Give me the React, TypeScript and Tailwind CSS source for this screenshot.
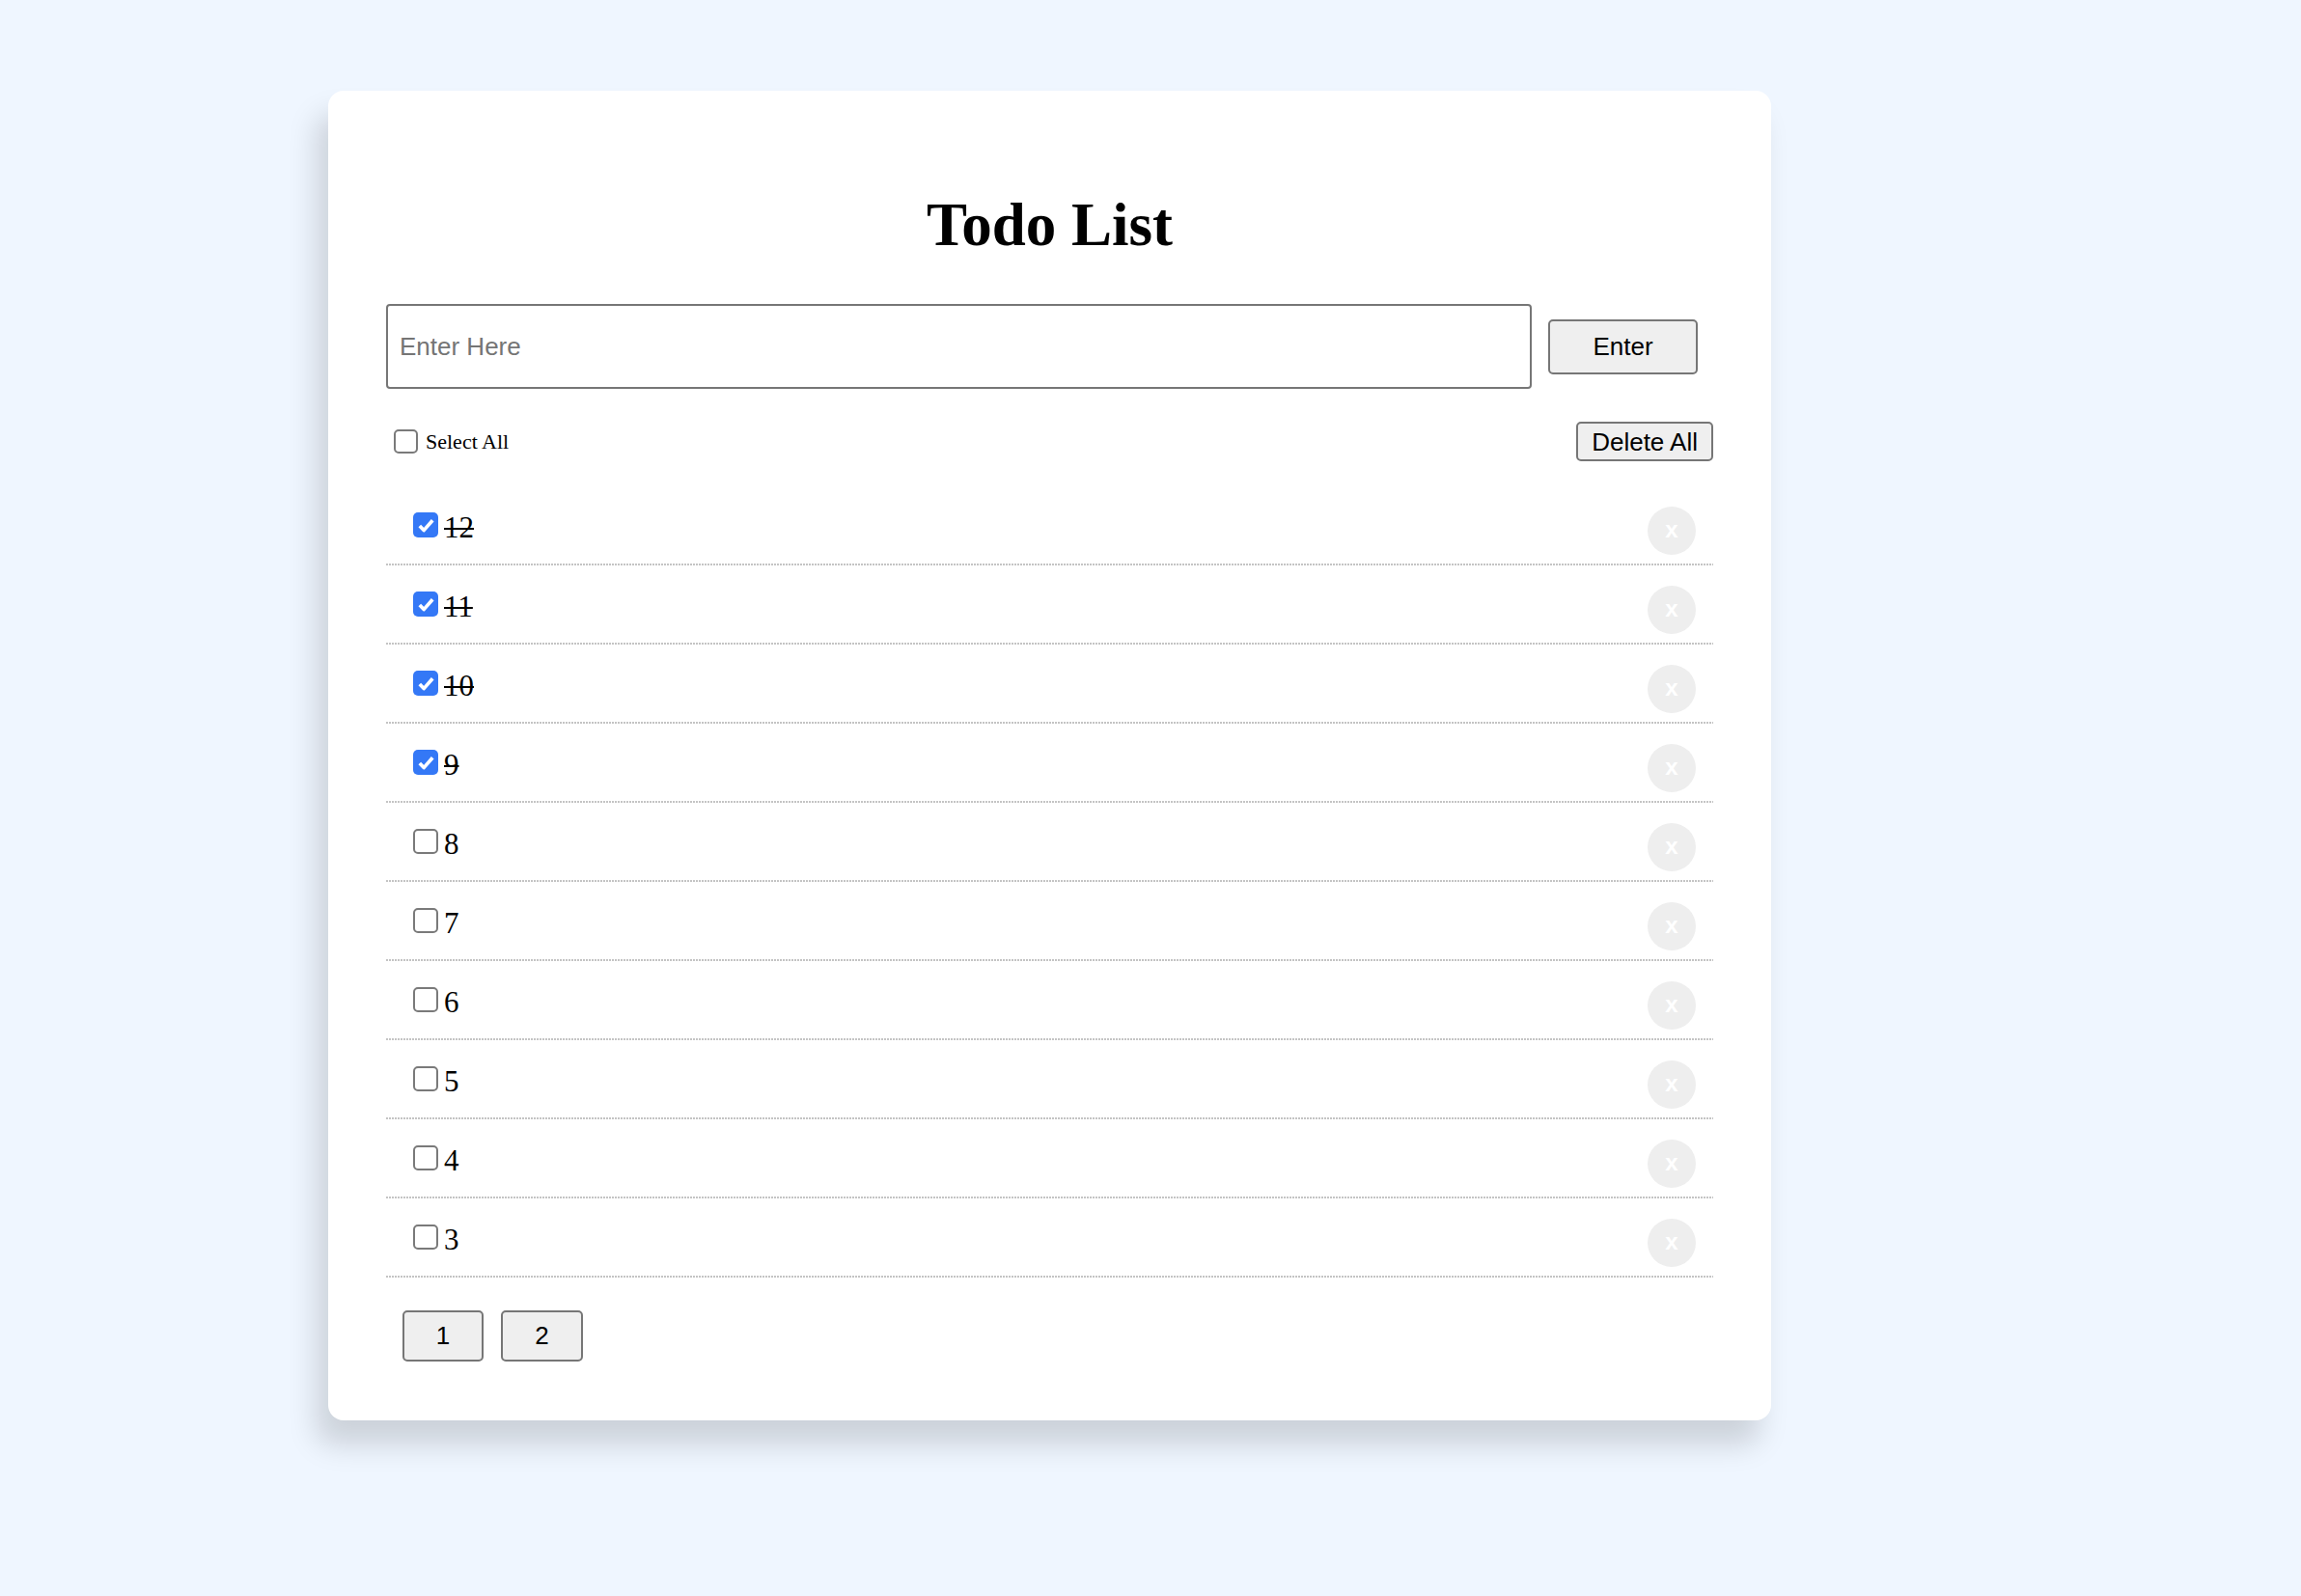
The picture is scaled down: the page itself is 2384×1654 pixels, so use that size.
import { useState } from "react";

type Todo = { id: number; done: boolean };

const initialTodos: Todo[] = [12, 11, 10, 9, 8, 7, 6, 5, 4, 3].map((id) => ({
  id,
  done: id >= 9,
}));

const CheckBox = ({ checked, box }: { checked: boolean; box: string }) => {
  if (checked) {
    return (
      <span className={`${box} flex shrink-0 items-center justify-center rounded-[5px] bg-[#3478f6]`}>
        <svg viewBox="0 0 24 24" className="h-[23px] w-[23px]" fill="none">
          <path d="M5 12.5l4.5 4.8L19 6.5" stroke="white" strokeWidth="3.8" strokeLinejoin="round" />
        </svg>
      </span>
    );
  }
  return <span className={`${box} block shrink-0 rounded-[5px] border-2 border-[#7a7a7a] bg-white`} />;
};

const App = () => {
  const [todos] = useState(initialTodos);

  return (
    <main className="min-h-screen bg-[#eff6ff] pt-[94px] pb-[182px]">
      <div className="ml-[340px] w-[1495px] rounded-[16px] bg-white px-[60px] pt-[60px] pb-[61px] shadow-[-12px_25px_30px_rgba(0,0,0,0.15)]">
        <h1 className="mt-[45px] text-center font-['Liberation_Serif','Times_New_Roman',serif] text-[63px] font-bold leading-[69px] text-black">
          Todo List
        </h1>

        {/* input row */}
        <div className="mt-[47px] flex items-center font-['Liberation_Sans',Arial,sans-serif]">
          <input
            placeholder="Enter Here"
            className="h-[88px] min-w-0 flex-1 rounded-[4px] border-2 border-[#767676] px-[12px] text-[26px] text-black outline-none placeholder:text-[#757575]"
          />
          <button className="ml-[17px] mr-[16px] h-[57px] w-[155px] rounded-[5px] border-2 border-[#767676] bg-[#efefef] text-[26px] text-black">
            Enter
          </button>
        </div>

        {/* select all row */}
        <div className="mt-[34px] flex items-center justify-between">
          <label className="flex items-center gap-[8px] pl-[8px]">
            <CheckBox checked={false} box="h-[25px] w-[25px]" />
            <span className="font-['Liberation_Serif','Times_New_Roman',serif] text-[22px] text-black">Select All</span>
          </label>
          <button className="h-[41px] rounded-[5px] border-2 border-[#767676] bg-[#efefef] px-[14px] font-['Liberation_Sans',Arial,sans-serif] text-[26px] leading-[30px] text-black">
            Delete All
          </button>
        </div>

        {/* list */}
        <ul className="mt-[26px]">
          {todos.map((t) => (
            <li key={t.id} className="pt-[21px]">
              <div className="flex items-start justify-between pb-[9px]">
                <div className="ml-[28px] mt-[5px] flex items-start gap-[6px]">
                  <span className="mt-[1px]">
                    <CheckBox checked={t.done} box="h-[26px] w-[26px]" />
                  </span>
                  <span
                    className={
                      t.done
                        ? "font-['Liberation_Serif','Times_New_Roman',serif] text-[31px] leading-[34px] text-black line-through decoration-[2px]"
                        : "font-['Liberation_Serif','Times_New_Roman',serif] text-[31px] leading-[34px] text-black"
                    }
                  >
                    {t.id}
                  </span>
                </div>
                <button className="mr-[18px] flex h-[50px] w-[50px] items-center justify-center rounded-full bg-[#eeeeee] pb-[3px] font-['Liberation_Sans',Arial,sans-serif] text-[24px] font-bold text-white">
                  x
                </button>
              </div>
              <div className="h-[2px] bg-[linear-gradient(to_right,#c4c4c4_2px,transparent_2px)] bg-[length:3px_2px]" />
            </li>
          ))}
        </ul>

        {/* pagination */}
        <div className="mt-[34px] flex gap-[18px] pl-[17px] font-['Liberation_Sans',Arial,sans-serif]">
          <button className="h-[53px] w-[84px] rounded-[5px] border-2 border-[#767676] bg-[#efefef] text-[26px] text-black">1</button>
          <button className="h-[53px] w-[85px] rounded-[5px] border-2 border-[#767676] bg-[#efefef] text-[26px] text-black">2</button>
        </div>
      </div>
    </main>
  );
};

export default App;
